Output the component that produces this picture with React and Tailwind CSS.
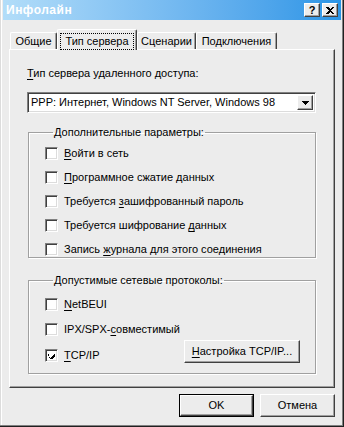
const font = { fontFamily: '"Liberation Sans", Arial, sans-serif' };

function U({ children }) {
  return <span className="underline underline-offset-[2px]">{children}</span>;
}

function Check({ checked }) {
  return (
    <span className="w-[13px] h-[13px] shrink-0 bg-white border border-t-[#808080] border-l-[#808080] border-r-white border-b-white shadow-[inset_1px_1px_#404040,inset_-1px_-1px_#dcdcdc] flex items-center justify-center">
      {checked && (
        <svg width="7" height="7" viewBox="0 0 7 7" shapeRendering="crispEdges">
          <path d="M0 2h1v3h1v1h1v-1h1v-1h1v-1h1v-1h1v3h-1v1h-1v1h-1v1h-1v-1h-1v-1h-1z" fill="#000" />
        </svg>
      )}
    </span>
  );
}

function Row({ checked, children }) {
  return (
    <div className="flex items-center h-[13px] gap-[6px] text-[11px] leading-[13px] text-black">
      <Check checked={checked} />
      <span>{children}</span>
    </div>
  );
}

function Btn({ children, def, className = '' }) {
  return (
    <div className={`${def ? 'border border-black' : ''} ${className}`}>
      <div className="h-full w-full flex items-center justify-center bg-[#ececec] border border-t-white border-l-white border-r-[#404040] border-b-[#404040] shadow-[inset_-1px_-1px_#a0a0a0] text-[11px] text-black">
        {children}
      </div>
    </div>
  );
}

function Group({ title, className = '', children }) {
  return (
    <fieldset className={`border border-[#a0a0a0] shadow-[1px_1px_0_#fff,inset_1px_1px_0_#fff] ${className}`}>
      <legend className="ml-[8px] px-[1px] text-[11px] leading-[13px] text-black">{title}</legend>
      {children}
    </fieldset>
  );
}

const TABS = ['Общие', 'Тип сервера', 'Сценарии', 'Подключения'];
const TAB_W = ['w-[47px]', 'w-[80px]', 'w-[59px]', 'w-[81px]'];

export default function App() {
  return (
    <div style={font} className="w-[344px] h-[427px] bg-[#ececec] flex flex-col px-[3px] pb-[3px] shadow-[inset_-1px_-1px_#202020,inset_-2px_-2px_#808080,inset_1px_0_#dcdcdc,inset_2px_0_#fff] overflow-hidden">
      {/* Title bar */}
      <div className="h-[20px] shrink-0 flex items-center justify-between pl-[3px] pr-[3px] bg-gradient-to-r from-[#b2ddf9] to-[#2a95e6]">
        <span className="text-white font-bold text-[12px] tracking-[0.5px]">Инфолайн</span>
        <div className="flex gap-[2px]">
          <div className="w-[16px] h-[14px] bg-[#ececec] border border-t-white border-l-white border-r-[#404040] border-b-[#404040] shadow-[inset_-1px_-1px_#a0a0a0] flex items-center justify-center text-[11px] font-bold leading-none text-black">?</div>
          <div className="w-[16px] h-[14px] bg-[#ececec] border border-t-white border-l-white border-r-[#404040] border-b-[#404040] shadow-[inset_-1px_-1px_#a0a0a0] flex items-center justify-center">
            <svg width="8" height="7" viewBox="0 0 8 7" shapeRendering="crispEdges">
              <path d="M0 0h2l2 2 2-2h2l-3 3.5 3 3.5h-2l-2-2-2 2h-2l3-3.5z" fill="#000" />
            </svg>
          </div>
        </div>
      </div>

      {/* Tabs */}
      <div className="mt-[9px] ml-[6px] mr-[6px] flex items-end h-[20px] pl-[1px]">
        {TABS.map((t, i) => {
          const sel = i === 1;
          return (
            <div
              key={t}
              className={`${TAB_W[i]} ${sel ? 'h-[21px] -mb-px relative z-10 bg-[#ececec]' : 'h-[17px]'} flex items-center justify-center border-l border-t border-r border-l-white border-t-white border-r-[#404040] shadow-[inset_-1px_0_#a0a0a0] rounded-t-[2px] text-[11px] text-black`}
            >
              {sel ? (
                <span className="border border-dotted border-black px-[4px] h-[17px] leading-[15px] -mb-[2px]">{t}</span>
              ) : (
                <span className="pt-[1px]">{t}</span>
              )}
            </div>
          );
        })}
      </div>

      {/* Panel */}
      <div className="mx-[6px] h-[339px] shrink-0 border border-t-white border-l-white border-r-[#404040] border-b-[#404040] shadow-[inset_-1px_-1px_#a0a0a0] pl-[17px] pr-[18px] pt-[17px] flex flex-col">
        <div className="text-[11px] leading-[13px] text-black"><U>Т</U>ип сервера удаленного доступа:</div>
        <div className="mt-[12px] h-[21px] w-[289px] bg-white border border-t-[#808080] border-l-[#808080] border-r-white border-b-white shadow-[inset_1px_1px_#404040,inset_-1px_-1px_#dcdcdc] flex items-center justify-between pl-[3px] pr-[2px]">
          <span className="text-[11px] text-black">PPP: Интернет, Windows NT Server, Windows 98</span>
          <div className="w-[16px] h-[15px] bg-[#ececec] border border-t-white border-l-white border-r-[#404040] border-b-[#404040] shadow-[inset_-1px_-1px_#a0a0a0] flex items-center justify-center">
            <svg width="7" height="4" viewBox="0 0 7 4" shapeRendering="crispEdges">
              <path d="M0 0h7v1h-1v1h-1v1h-1v1h-1v-1h-1v-1h-1v-1h-1z" fill="#000" />
            </svg>
          </div>
        </div>

        <Group title="Дополнительные параметры:" className="mt-[13px] ml-[1px] w-[288px] h-[132px] pl-[16px] pt-[8px]">
          <div className="flex flex-col gap-[11px]">
            <Row><U>В</U>ойти в сеть</Row>
            <Row><U>П</U>рограммное сжатие данных</Row>
            <Row>Требуется <U>з</U>ашифрованный пароль</Row>
            <Row>Требуется шифрование <U>д</U>анных</Row>
            <Row>Запись <U>ж</U>урнала для этого соединения</Row>
          </div>
        </Group>

        <Group title="Допустимые сетевые протоколы:" className="mt-[16px] ml-[1px] w-[288px] h-[100px] pl-[16px] pt-[11px] pr-[15px]">
          <div className="flex flex-col gap-[12px]">
            <Row><U>N</U>etBEUI</Row>
            <Row>IPX/SPX-<U>с</U>овместимый</Row>
            <div className="flex items-center justify-between">
              <Row checked><U>T</U>CP/IP</Row>
              <Btn className="w-[116px] h-[23px] -mt-[8px]"><span><U>Н</U>астройка TCP/IP...</span></Btn>
            </div>
          </div>
        </Group>
      </div>

      {/* Bottom buttons */}
      <div className="mt-[6px] mr-[6px] flex justify-end gap-[6px]">
        <Btn def className="w-[75px] h-[23px]">OK</Btn>
        <Btn className="w-[75px] h-[23px]">Отмена</Btn>
      </div>
    </div>
  );
}
